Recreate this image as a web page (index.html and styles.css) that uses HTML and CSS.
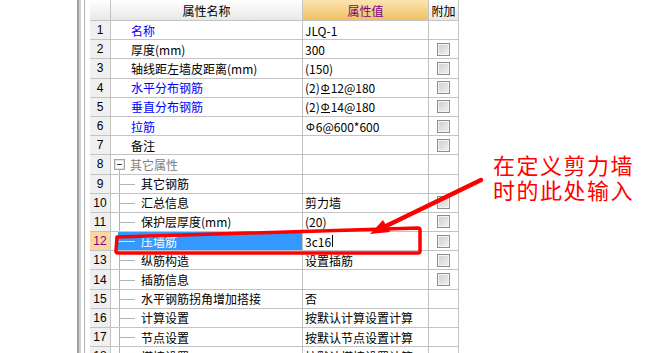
FILE: index.html
```html
<!DOCTYPE html>
<html lang="zh">
<head>
    <meta charset="UTF-8">
    <meta name="viewport" content="width=device-width, initial-scale=1.0">
    <title>属性编辑器</title>
    <link rel="stylesheet" href="styles.css">
</head>
<body>
    <div class="app">
        <div class="side-panel"></div>
        <div class="splitter"></div>
        <div class="grid-area">
            <div class="prop-grid">
                <div class="hd hd-num"></div>
                <div class="hd hd-name">属性名称</div>
                <div class="hd hd-value">属性值</div>
                <div class="hd hd-extra">附加</div>

                <div class="num">1</div>
                <div class="name link">名称</div>
                <div class="value">JLQ-1</div>
                <div class="extra"></div>

                <div class="num">2</div>
                <div class="name">厚度(mm)</div>
                <div class="value">300</div>
                <div class="extra"><span class="check"></span></div>

                <div class="num">3</div>
                <div class="name">轴线距左墙皮距离(mm)</div>
                <div class="value">(150)</div>
                <div class="extra"><span class="check"></span></div>

                <div class="num">4</div>
                <div class="name link">水平分布钢筋</div>
                <div class="value">(2)<span class="bar bar-3">Φ</span>12@180</div>
                <div class="extra"><span class="check"></span></div>

                <div class="num">5</div>
                <div class="name link">垂直分布钢筋</div>
                <div class="value">(2)<span class="bar bar-3">Φ</span>14@180</div>
                <div class="extra"><span class="check"></span></div>

                <div class="num">6</div>
                <div class="name link">拉筋</div>
                <div class="value"><span class="bar">Φ</span>6@600*600</div>
                <div class="extra"><span class="check"></span></div>

                <div class="num">7</div>
                <div class="name">备注</div>
                <div class="value"></div>
                <div class="extra"><span class="check"></span></div>

                <div class="num">8</div>
                <div class="name group"><span class="toggle"></span>其它属性</div>
                <div class="value"></div>
                <div class="extra"></div>

                <div class="num">9</div>
                <div class="name child"><span class="node">其它钢筋</span></div>
                <div class="value"></div>
                <div class="extra"></div>

                <div class="num">10</div>
                <div class="name child"><span class="node">汇总信息</span></div>
                <div class="value">剪力墙</div>
                <div class="extra"><span class="check"></span></div>

                <div class="num">11</div>
                <div class="name child"><span class="node">保护层厚度(mm)</span></div>
                <div class="value">(20)</div>
                <div class="extra"><span class="check"></span></div>

                <div class="num current">12</div>
                <div class="name child"><span class="node selected">压墙筋</span></div>
                <div class="value editing">3c16<span class="caret"></span></div>
                <div class="extra"><span class="check"></span></div>

                <div class="num">13</div>
                <div class="name child"><span class="node">纵筋构造</span></div>
                <div class="value">设置插筋</div>
                <div class="extra"><span class="check"></span></div>

                <div class="num">14</div>
                <div class="name child"><span class="node">插筋信息</span></div>
                <div class="value"></div>
                <div class="extra"><span class="check"></span></div>

                <div class="num">15</div>
                <div class="name child"><span class="node">水平钢筋拐角增加搭接</span></div>
                <div class="value">否</div>
                <div class="extra"></div>

                <div class="num">16</div>
                <div class="name child"><span class="node">计算设置</span></div>
                <div class="value">按默认计算设置计算</div>
                <div class="extra"></div>

                <div class="num">17</div>
                <div class="name child"><span class="node">节点设置</span></div>
                <div class="value">按默认节点设置计算</div>
                <div class="extra"></div>

                <div class="num">18</div>
                <div class="name child"><span class="node">搭接设置</span></div>
                <div class="value">按默认搭接设置计算</div>
                <div class="extra"></div>
            </div>
        </div>
    </div>

    <!-- 标注 -->
    <div class="callout">在定义剪力墙<br>时的此处输入</div>
    <svg class="markup" width="650" height="353" viewBox="0 0 650 353">
        <path d="M117 237 L418 228 Q420 228 420 230 L420 251 Q420 253 418 253 L118 253 Q116 253 116 251 Z" fill="none" stroke="#ff0000" stroke-width="3.5" stroke-linejoin="round"/>
        <line x1="481" y1="180" x2="382" y2="228" stroke="#ff0000" stroke-width="4.5" stroke-linecap="round"/>
        <polygon points="370,234 383,220 390,232" fill="#ff0000"/>
    </svg>
</body>
</html>
```

FILE: styles.css
```css
body {
    margin: 0;
    width: 650px;
    height: 353px;
    overflow: hidden;
    position: relative;
    background-color: #fff;
    font-family: "Noto Sans CJK SC", sans-serif;
    font-size: 12px;
    color: #000;
}
.app {
    display: flex;
    height: 353px;
}
.side-panel {
    width: 77px;
    background-color: #fff;
    border-right: 2px solid #a0a0a0;
}
.splitter {
    width: 2px;
    background-color: #d2d2d2;
    margin-right: 3px;
}
.grid-area {
    border-left: 1px solid #b4b4b4;
    padding-left: 5px;
}
.prop-grid {
    display: grid;
    grid-template-columns: 21px 192px 126px 30px;
    grid-template-rows: 21px;
    grid-auto-rows: 19.2px;
}
.prop-grid > div {
    box-sizing: border-box;
    border-right: 1px solid #c3c3c3;
    border-bottom: 1px solid #c3c3c3;
    display: flex;
    align-items: center;
    white-space: nowrap;
    overflow: hidden;
}
.hd {
    justify-content: center;
    background: linear-gradient(#ffffff, #e8e8e8);
}
.hd-value {
    background: linear-gradient(#fbe4b3, #f0c162);
    color: #800080;
}
.num {
    justify-content: center;
    background-color: #f0f0f0;
    font-family: "Liberation Sans", sans-serif;
}
.num.current {
    background-color: #fcd79c;
    color: #800080;
}
.name {
    padding-left: 20px;
}
.name.link {
    color: #0000ff;
}
.name.group {
    padding-left: 3px;
    color: #808080;
    position: relative;
}
.name.group::after {
    content: "";
    position: absolute;
    left: 8px;
    top: calc(50% + 5px);
    bottom: -1px;
    width: 1px;
    background-color: #b4b4b4;
}
.toggle {
    width: 11px;
    height: 11px;
    box-sizing: border-box;
    margin-right: 5px;
    border: 1px solid #a4a4a4;
    box-shadow: inset 0 0 0 1px #e4e4e4;
    background-color: #fff;
    display: flex;
    align-items: center;
    justify-content: center;
}
.toggle::before {
    content: "";
    width: 5px;
    height: 1px;
    background-color: #404040;
}
.name.child {
    padding-left: 7px;
    position: relative;
}
.name.child::before {
    content: "";
    position: absolute;
    left: 8px;
    top: 0;
    bottom: -1px;
    width: 1px;
    background-color: #b4b4b4;
}
.node {
    flex: 1;
    align-self: stretch;
    display: flex;
    align-items: center;
    padding-left: 23px;
    position: relative;
}
.node::before {
    content: "";
    position: absolute;
    left: 1px;
    top: 50%;
    width: 16px;
    height: 1px;
    background-color: #b4b4b4;
}
.node.selected {
    background-color: #3399ff;
    color: #fff;
}
.node.selected::before {
    background-color: #d0e6ff;
}
.value {
    padding-left: 2px;
}
.bar {
    font-size: 11px;
    margin: 0 1px;
}
.bar-3 {
    border-bottom: 1px solid #000;
    line-height: 11px;
}
.caret {
    width: 1px;
    height: 12px;
    margin-left: 1px;
    background-color: #000;
}
.extra {
    justify-content: center;
}
.check {
    width: 13px;
    height: 13px;
    box-sizing: border-box;
    border: 1px solid #8e8e8e;
    box-shadow: inset 0 0 0 1px #f4f4f4;
    background: linear-gradient(135deg, #cdcdcd, #f2f2f2);
}
.callout {
    position: absolute;
    left: 493px;
    top: 152px;
    color: #ff0000;
    font-size: 22px;
    line-height: 25px;
    letter-spacing: 1.5px;
}
.markup {
    position: absolute;
    left: 0;
    top: 0;
    pointer-events: none;
}
```
